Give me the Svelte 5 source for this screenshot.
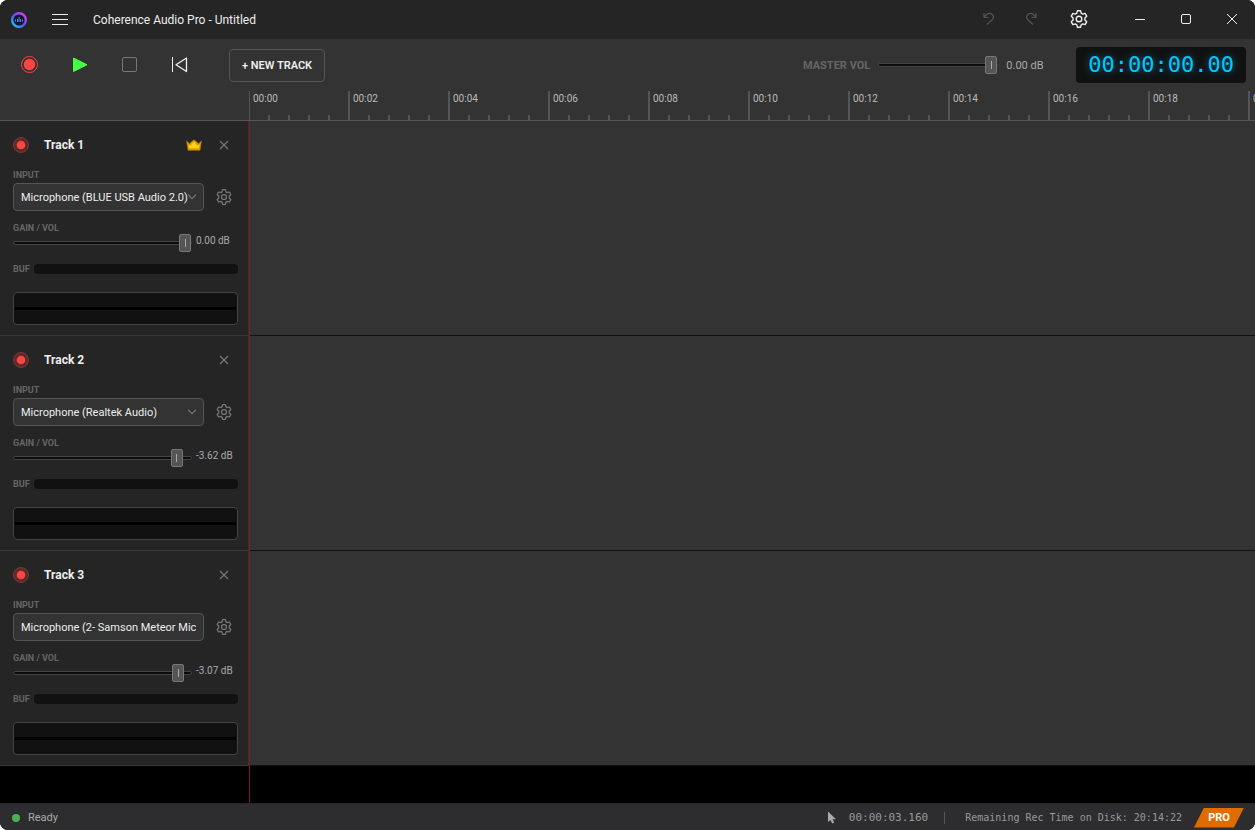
<script lang="ts">
  type Track = {
    id: number;
    input: string;
    chevron: boolean;
    gain: number;
    db: string;
    master: boolean;
  };

  let tracks: Track[] = $state([
    { id: 1, input: 'Microphone (BLUE USB Audio 2.0)', chevron: true, gain: 100, db: '0.00 dB', master: true },
    { id: 2, input: 'Microphone (Realtek Audio)', chevron: true, gain: 95, db: '-3.62 dB', master: false },
    { id: 3, input: 'Microphone (2- Samson Meteor Mic)', chevron: false, gain: 96, db: '-3.07 dB', master: false }
  ]);

  let masterVol = $state(100);
  let rulerWidth = $state(0);

  // one label every two seconds, 100px apart
  let marks = $derived(
    Array.from({ length: Math.ceil(rulerWidth / 100) }, (_, i) => {
      const s = i * 2;
      return `${String(Math.floor(s / 60)).padStart(2, '0')}:${String(s % 60).padStart(2, '0')}`;
    })
  );

  function removeTrack(id: number) {
    tracks = tracks.filter((t) => t.id !== id);
  }
</script>

{#snippet gear(size: number)}
  <svg width={size} height={size} viewBox="0 0 18 18" fill="none" stroke="currentColor" stroke-width="1.4" stroke-linejoin="round">
    <path d="M7.400 .8h3.200l.6 2.400 1.500.9 2.400-.7 1.600 2.800-1.800 1.700v2.200l1.800 1.700-1.600 2.800-2.400-.7-1.500.9-.6 2.400H7.400l-.6-2.400-1.500-.9-2.400.7-1.600-2.800 1.800-1.700V7.900L1.300 6.200l1.600-2.800 2.400.7 1.500-.9z" />
    <circle cx="9" cy="9" r="2.800" />
  </svg>
{/snippet}

<div class="window">
  <header class="titlebar">
    <svg class="logo" width="16" height="16" viewBox="0 0 16 16" fill="none">
      <defs>
        <linearGradient id="ring" x1="0" y1="1" x2="1" y2="0">
          <stop offset="0" stop-color="#18d4f4" />
          <stop offset="0.5" stop-color="#5a50f0" />
          <stop offset="1" stop-color="#f03cf0" />
        </linearGradient>
      </defs>
      <circle cx="8" cy="8" r="6.800" fill="#151530" stroke="url(#ring)" stroke-width="2.400" />
      <path d="M4.500 7.500v2M6.500 7v3M8 5v5M9.500 7v3M11.500 7.500v2" stroke="#3f8cf0" />
    </svg>
    <button class="menu" aria-label="Menu">
      <svg width="16" height="12" viewBox="0 0 16 12" stroke="currentColor"><path d="M0 .5h16M0 5.500h16M0 10.500h16" /></svg>
    </button>
    <h1>Coherence Audio Pro - Untitled</h1>

    <div class="tools">
      <button disabled aria-label="Undo">
        <svg width="12" height="13" viewBox="0 0 12 13" fill="none" stroke="currentColor" stroke-width="1.200"><path d="M1 1v4.500h4.500M1.300 5.200C3.500 2 6.500.8 8.800 2.200c2 1.300 2 3.800.5 5.300L4 12.500" /></svg>
      </button>
      <button disabled aria-label="Redo">
        <svg width="12" height="13" viewBox="0 0 12 13" fill="none" stroke="currentColor" stroke-width="1.200"><path d="M11 1v4.500H6.500M10.700 5.200C8.500 2 5.500.8 3.200 2.200c-2 1.300-2 3.800-.5 5.300L8 12.500" /></svg>
      </button>
      <button class="settings" aria-label="Settings">{@render gear(18)}</button>
    </div>

    <div class="controls">
      <button aria-label="Minimize">
        <svg width="12" height="12" viewBox="0 0 12 12" stroke="currentColor"><path d="M1 6.500h10" /></svg>
      </button>
      <button aria-label="Maximize">
        <svg width="12" height="12" viewBox="0 0 12 12" fill="none" stroke="currentColor"><rect x="1.500" y="1.500" width="9" height="9" rx="1.500" /></svg>
      </button>
      <button aria-label="Close">
        <svg width="12" height="12" viewBox="0 0 12 12" stroke="currentColor"><path d="M1 1l10 10M11 1L1 11" /></svg>
      </button>
    </div>
  </header>

  <div class="toolbar">
    <div class="transport">
      <button aria-label="Record">
        <svg width="18" height="18" viewBox="0 0 18 18" fill="none"><circle cx="8.500" cy="8.500" r="8" stroke="#ff4444" /><circle cx="8.500" cy="8.500" r="5.700" fill="#ff4444" /></svg>
      </button>
      <button aria-label="Play">
        <svg width="16" height="16" viewBox="0 0 16 16"><path d="M1.500 1v13.500L15 7.750z" fill="#44ff44" stroke="#44ff44" stroke-linejoin="round" /></svg>
      </button>
      <button aria-label="Stop">
        <svg width="16" height="16" viewBox="0 0 16 16" fill="none"><rect x=".5" y=".5" width="14" height="14" rx="1.500" stroke="#777" /></svg>
      </button>
      <button aria-label="Back to start">
        <svg width="16" height="16" viewBox="0 0 16 16" fill="none" stroke="#eee"><path d="M.5 0v15" /><path d="M14.500 1v13.500L4 7.750z" stroke-width="1.300" stroke-linejoin="round" /></svg>
      </button>
    </div>
    <button class="new-track">+ NEW TRACK</button>

    <div class="master">
      <label for="master-vol">MASTER VOL</label>
      <input id="master-vol" type="range" min="0" max="100" bind:value={masterVol} />
      <output for="master-vol">0.00 dB</output>
    </div>
    <div class="timecode">00:00:00.00</div>
  </div>

  <div class="ruler">
    <div class="ticks" bind:clientWidth={rulerWidth}>
      {#each marks as mark}
        <span>{mark}</span>
      {/each}
    </div>
  </div>

  <main>
    {#each tracks as track (track.id)}
      <section class="track">
        <div class="panel">
          <div class="track-head">
            <button class="arm" aria-label={`Arm track ${track.id}`}>
              <svg width="16" height="16" viewBox="0 0 16 16"><circle cx="8" cy="8" r="7.500" fill="#592c2c" stroke="#873434" /><circle cx="8" cy="8" r="4.300" fill="#ff4444" /></svg>
            </button>
            <h2>Track {track.id}</h2>
            {#if track.master}
              <svg class="crown" width="16" height="12" viewBox="0 0 16 12"><path d="M.6 2l2.900 2.800L5.800 2.600 8 .8l2.200 1.800 2.300 2.200L15.400 2 14 11.300H2z" fill="#e0a000" stroke="#b57a08" stroke-width=".6" /><path d="M2.500 6l2.200.8L8 2.500l3.300 4.300 2.200-.8-.6 3.200H3.100z" fill="#ffd21a" /></svg>
            {/if}
            <button class="icon" aria-label={`Remove track ${track.id}`} onclick={() => removeTrack(track.id)}>
              <svg width="10" height="10" viewBox="0 0 10 10" stroke="currentColor" stroke-width="1.200"><path d="M1 1l8 8M9 1L1 9" /></svg>
            </button>
          </div>

          <label class="caption" for={`input-${track.id}`}>INPUT</label>
          <div class="input-row">
            <div class="select">
              <select id={`input-${track.id}`}>
                <option>{track.input}</option>
              </select>
              {#if track.chevron}
                <svg width="10" height="6" viewBox="0 0 10 6" fill="none" stroke="#777" stroke-width="1.200"><path d="M1 .7l4 4 4-4" /></svg>
              {/if}
            </div>
            <button class="icon" aria-label="Input settings">{@render gear(16)}</button>
          </div>

          <label class="caption gain-caption" for={`gain-${track.id}`}>GAIN / VOL</label>
          <div class="gain-row">
            <input id={`gain-${track.id}`} type="range" min="0" max="100" bind:value={track.gain} />
            <output for={`gain-${track.id}`}>{track.db}</output>
          </div>

          <div class="buffer">
            <span>BUF</span>
            <div class="buffer-bar"></div>
          </div>

          <div class="meter"><div></div></div>
        </div>
        <div class="lane"></div>
      </section>
    {/each}
    <div class="playhead"></div>
  </main>

  <footer>
    <span class="dot"></span>
    <span class="ready">Ready</span>
    <svg class="pointer" width="10" height="13" viewBox="0 0 10 13"><path d="M1 .5v10.500l2.500-2 1.700 3.500 2-1-1.600-3.200H9z" fill="#aaa" /></svg>
    <span class="position">00:00:03.160</span>
    <span class="divider"></span>
    <span class="remaining">Remaining Rec Time on Disk: 20:14:22</span>
    <span class="pro">PRO</span>
  </footer>
</div>

<style>
  :global(body) {
    background: #fff;
  }

  .window {
    display: flex;
    flex-direction: column;
    min-height: 100vh;
    border-radius: 8px;
    overflow: hidden;
    background: #000;
    color: #eee;
    font-family: Roboto, 'Open Sans', sans-serif;
    font-size: 11px;
  }

  .window * {
    box-sizing: border-box;
  }

  button {
    display: flex;
    align-items: center;
    justify-content: center;
    padding: 0;
    border: 0;
    background: none;
    color: inherit;
    font: inherit;
  }

  h1,
  h2 {
    margin: 0;
    font-weight: 400;
    font-size: 12px;
  }

  .titlebar {
    display: flex;
    align-items: center;
    height: 39px;
    padding-left: 11px;
    background: #252525;
  }

  .menu {
    width: 40px;
    height: 32px;
    margin-left: 13px;
  }

  .titlebar h1 {
    margin-left: 13px;
  }

  .tools,
  .controls {
    display: flex;
    align-self: flex-start;
  }

  .tools {
    margin-left: auto;
  }

  .tools button {
    width: 42px;
    height: 37px;
  }

  .tools button:disabled {
    color: #555;
  }

  .tools .settings {
    margin-left: 6px;
  }

  .controls {
    margin-left: 17px;
  }

  .controls button {
    width: 46px;
    height: 38px;
  }

  .toolbar {
    display: flex;
    align-items: center;
    height: 52px;
    padding: 0 9px 0 5px;
    background: #333;
  }

  .transport {
    display: flex;
  }

  .transport button {
    width: 50px;
    height: 40px;
  }

  .new-track {
    height: 33px;
    margin-left: 24px;
    padding: 0 12px;
    border: 1px solid #555;
    border-radius: 4px;
    font-weight: 600;
  }

  .master {
    display: flex;
    align-items: center;
    gap: 8px;
    margin-left: auto;
    color: #aaa;
  }

  .master label {
    color: #666;
    font-weight: 700;
  }

  .master input {
    width: 120px;
  }

  .master output {
    width: 36px;
    white-space: nowrap;
  }

  .timecode {
    height: 36px;
    margin-left: 34px;
    padding: 0 12px;
    border-radius: 4px;
    background: #111;
    color: #00c8ff;
    font: 22px/36px 'DejaVu Sans Mono', monospace;
    text-shadow: 0 0 8px rgb(0 200 255 / 0.5);
  }

  input[type='range'] {
    appearance: none;
    height: 18px;
    margin: 0;
    background: none;
  }

  input[type='range']::-webkit-slider-runnable-track {
    height: 4px;
    border: 1px solid #444;
    border-radius: 2px;
    background: #0c0c0c;
  }

  input[type='range']::-webkit-slider-thumb {
    appearance: none;
    width: 12px;
    height: 18px;
    margin-top: -8px;
    border: 1px solid #777;
    border-radius: 2px;
    background: linear-gradient(#aaa, #aaa) center / 1px 8px no-repeat #555;
  }

  .ruler {
    height: 30px;
    padding-left: 249px;
    border-bottom: 1px solid #555;
    background: #333;
  }

  .ticks {
    display: flex;
    height: 29px;
    background:
      linear-gradient(90deg, #555 2px, transparent 2px) -1px 0 / 100px 29px repeat-x,
      linear-gradient(90deg, #555 2px, transparent 2px) -1px 100% / 20px 5px repeat-x;
    overflow: hidden;
  }

  .ticks span {
    flex: 0 0 100px;
    padding-left: 4px;
    color: #bbb;
    font-size: 10px;
    line-height: 16px;
  }

  main {
    position: relative;
    flex: 1;
  }

  .track {
    display: grid;
    grid-template-columns: 249px 1fr;
  }

  .panel {
    display: flex;
    flex-direction: column;
    padding: 12px 10px 10px 13px;
    border-right: 1px solid #333;
    border-bottom: 1px solid #3a3a3a;
    background: #252525;
  }

  .lane {
    border-bottom: 1px solid #111;
    background: #333;
  }

  .playhead {
    position: absolute;
    top: 0;
    bottom: 0;
    left: 249px;
    width: 1px;
    background: #8c1616;
  }

  .track-head {
    display: flex;
    align-items: center;
    height: 24px;
    margin-bottom: 12px;
    padding-right: 4px;
  }

  .track-head h2 {
    flex: 1;
    margin-left: 15px;
    font-weight: 700;
  }

  .crown {
    margin-right: 12px;
  }

  .icon {
    width: 20px;
    height: 20px;
    color: #777;
  }

  .caption,
  .buffer span {
    color: #666;
    font-size: 9px;
    font-weight: 700;
    line-height: 12px;
  }

  .input-row {
    display: flex;
    align-items: center;
    gap: 10px;
    margin-top: 2px;
    padding-right: 4px;
  }

  .select {
    position: relative;
    flex: 1;
    min-width: 0;
  }

  .select select {
    appearance: none;
    display: block;
    width: 100%;
    height: 28px;
    padding: 0 7px;
    border: 1px solid #555;
    border-radius: 4px;
    background: #333;
    color: #eee;
    font: inherit;
  }

  .select svg {
    position: absolute;
    top: 11px;
    right: 7px;
    pointer-events: none;
  }

  .gain-caption {
    margin-top: 11px;
  }

  .gain-row {
    display: flex;
    gap: 4px;
  }

  .gain-row input {
    width: 179px;
  }

  .gain-row output {
    color: #aaa;
    font-size: 10px;
    line-height: 14px;
    white-space: nowrap;
  }

  .buffer {
    display: flex;
    align-items: center;
    height: 12px;
    margin-top: 11px;
  }

  .buffer span {
    width: 21px;
  }

  .buffer-bar {
    flex: 1;
    height: 10px;
    border-radius: 4px;
    background: #111;
  }

  .meter {
    display: flex;
    align-items: center;
    height: 33px;
    margin-top: 17px;
    padding: 0 1px;
    border: 1px solid #444;
    border-radius: 4px;
    background: #111;
  }

  .meter div {
    flex: 1;
    height: 3px;
    background: #000;
  }

  footer {
    display: flex;
    align-items: center;
    height: 27px;
    padding: 1px 11px 0 12px;
    border-top: 1px solid #252525;
    background: #2d2d30;
    color: #aaa;
  }

  .dot {
    width: 8px;
    height: 8px;
    border-radius: 50%;
    background: #4caf50;
  }

  .ready {
    margin-left: 8px;
  }

  .pointer {
    margin-left: auto;
  }

  .position,
  .remaining {
    font-family: 'DejaVu Sans Mono', monospace;
    color: #999;
  }

  .position {
    margin-left: 12px;
  }

  .divider {
    width: 1px;
    height: 12px;
    margin: 0 20px 0 16px;
    background: #555;
  }

  .remaining {
    font-size: 10px;
  }

  .pro {
    width: 50px;
    height: 20px;
    margin-left: 12px;
    background: #e06c00;
    clip-path: polygon(20% 0, 100% 0, 80% 100%, 0 100%);
    color: #fff;
    font-weight: 700;
    line-height: 20px;
    text-align: center;
  }
</style>
